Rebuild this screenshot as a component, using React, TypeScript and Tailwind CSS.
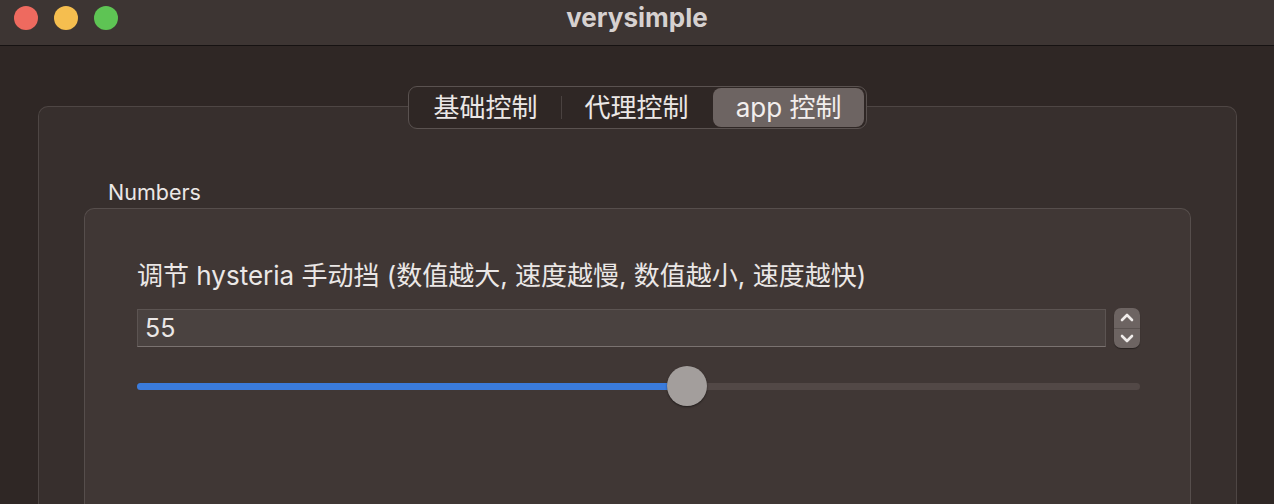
import React, { useState } from 'react';

const font = { fontFamily: 'Inter, "Noto Sans CJK SC", sans-serif' };

export default function App() {
  const [tab, setTab] = useState(2);
  const [value, setValue] = useState(55);
  const tabs = ['基础控制', '代理控制', 'app 控制'];

  return (
    <div className="w-[1274px] h-[504px] overflow-hidden bg-[#2f2725] text-[#ebe7e6] flex flex-col" style={font}>
      {/* title bar */}
      <div className="h-[46px] shrink-0 bg-[#3d3533] border-b border-[#161212] flex items-start pt-[6px] px-[14px] relative">
        <div className="flex gap-4">
          <span className="w-6 h-6 rounded-full bg-[#ee6a5f]" />
          <span className="w-6 h-6 rounded-full bg-[#f5be4f]" />
          <span className="w-6 h-6 rounded-full bg-[#5ec454]" />
        </div>
        <div className="absolute inset-x-0 top-0 h-[34px] flex items-center justify-center pointer-events-none">
          <span className="text-[26px] font-bold text-[#d6d1d0]">verysimple</span>
        </div>
      </div>

      <div className="flex-1 flex flex-col pt-[40px] px-[37px] pl-[38px]">
        {/* segmented control */}
        <div className="flex justify-center relative z-10">
          <div className="flex items-center h-[43px] rounded-[9px] border border-[#5a5250] bg-[#2f2725] p-[2px]">
            {tabs.map((t, i) => (
              <React.Fragment key={t}>
                {i > 0 && (
                  <span className={`w-px h-[23px] ${tab === i || tab === i - 1 ? 'bg-transparent' : 'bg-[#4a4240]'}`} />
                )}
                <button
                  onClick={() => setTab(i)}
                  className={`h-[39px] px-[23px] rounded-[8px] text-[26px] leading-none ${
                    tab === i ? 'bg-[#6d6462] text-[#f2eeed]' : 'text-[#ebe7e6]'
                  }`}
                >
                  {t}
                </button>
              </React.Fragment>
            ))}
          </div>
        </div>

        {/* outer group */}
        <div className="-mt-[23px] flex-1 rounded-t-[10px] border border-b-0 border-[#4e4644] bg-[#372f2d] px-[45px] pt-[72px]">
          <div className="pl-[24px] text-[21.5px] leading-[26px] text-[#ebe7e6]">Numbers</div>
          <div className="mt-[3px] h-[400px] rounded-t-[10px] border border-b-0 border-[#564e4c] bg-[#403735] pl-[52px] pr-[50px] pt-[51px]">
            <div className="text-[26px] leading-[32px] text-[#ebe7e6]">
              调节 hysteria 手动挡 (数值越大, 速度越慢, 数值越小, 速度越快)
            </div>
            <div className="mt-[16px] flex items-center gap-[8px]">
              <input
                value={value}
                onChange={(e) => setValue(Number(e.target.value) || 0)}
                className="flex-1 h-[38px] bg-[#4a4240] border border-[#5c5452] border-b-[#7a7270] px-[7px] text-[25px] text-[#ebe7e6] outline-none"
                style={font}
              />
              <div className="w-[26px] h-[40px] rounded-[7px] bg-[#6d6462] flex flex-col shadow-[0_1px_1px_rgba(0,0,0,0.4)]">
                <button onClick={() => setValue(Math.min(100, value + 1))} className="flex-1 flex items-center justify-center border-b border-[#5a5250]">
                  <svg width="14" height="9" viewBox="0 0 14 9" fill="none">
                    <path d="M2 7l5-5 5 5" stroke="#f0ecea" strokeWidth="2.6" strokeLinecap="round" strokeLinejoin="round" />
                  </svg>
                </button>
                <button onClick={() => setValue(Math.max(0, value - 1))} className="flex-1 flex items-center justify-center">
                  <svg width="14" height="9" viewBox="0 0 14 9" fill="none">
                    <path d="M2 2l5 5 5-5" stroke="#f0ecea" strokeWidth="2.6" strokeLinecap="round" strokeLinejoin="round" />
                  </svg>
                </button>
              </div>
            </div>
            {/* slider */}
            <div className="mt-[18px] relative h-[40px] flex items-center">
              <div className="w-full h-[7px] rounded-full bg-[#524846] overflow-hidden">
                <div className="h-full bg-[#3a7bdc]" style={{ width: `${value}%` }} />
              </div>
              <div
                className="absolute top-0 w-[40px] h-[40px] rounded-full bg-[#a39e9c] shadow-[0_1px_2px_rgba(0,0,0,0.5)]"
                style={{ left: `calc(${value}% - ${value * 0.4}px)` }}
              />
            </div>
          </div>
        </div>
      </div>
    </div>
  );
}
